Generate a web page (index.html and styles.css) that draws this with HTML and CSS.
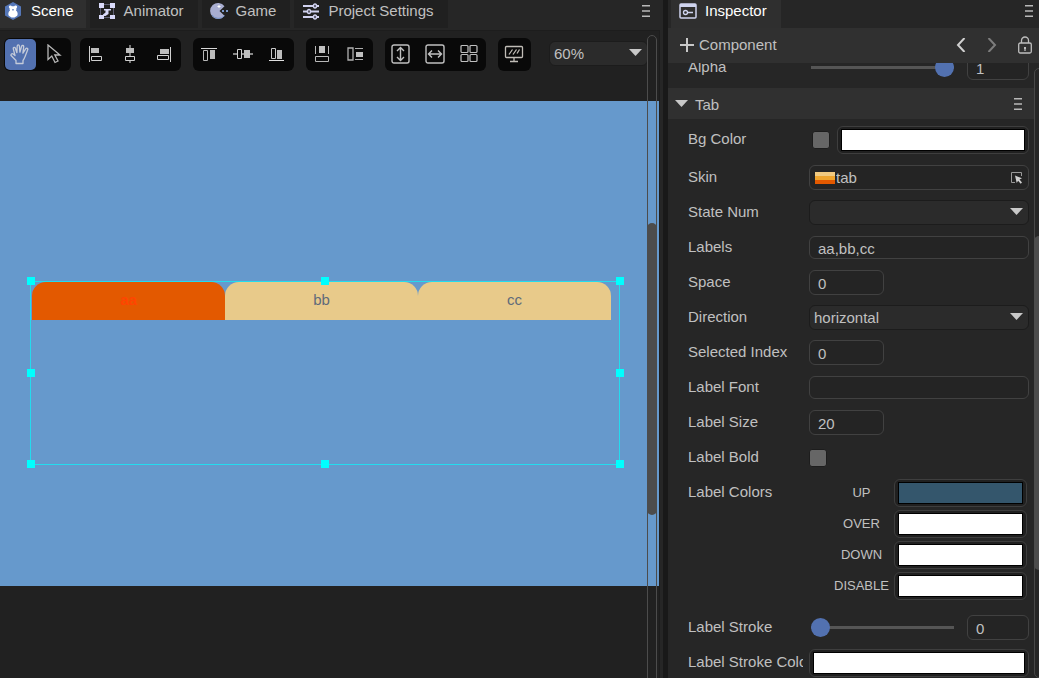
FILE: index.html
```html
<!DOCTYPE html>
<html lang="en">
<head>
<meta charset="utf-8">
<title>Scene editor</title>
<link rel="stylesheet" href="styles.css">
</head>
<body>
<div class="editor">
  <main class="scene-panel">
    <div class="tab-bar">
      <nav class="tabs">
        <button class="tab tab-first active" type="button">
          <svg class="tab-icon" width="18" height="18" viewBox="0 0 18 18"><path d="M8 0l8 4.500v9L8 18l-8-4.500v-9z" fill="#5577b8"/><path d="M4.200 4c1.200-1 2.200-.4 2.600.2h2.400c.4-.6 1.400-1.200 2.600-.2.700 1 .2 1.700-.4 2.200.2 1 0 1.700-.4 2.300 1.600 1.300 2.200 3.400 1.200 5.300L9.500 15.500h-3l-2.700-1.700c-1-1.900-.4-4 1.200-5.300-.4-.6-.6-1.300-.4-2.300C4 5.700 3.500 5 4.200 4z" fill="#fff"/><path d="M7 7h2v1.500H7z" fill="#8ba2cd"/></svg>
          Scene
        </button>
        <button class="tab" type="button">
          <svg class="tab-icon" width="18" height="18" viewBox="0 0 18 18" fill="#d9dafa"><path d="M1 1h5v5H1zM12 1h5v5h-5zM1 13h5v4H1zM12 13h5v4h-5z"/><path d="M6 2.500h6M2.500 6v7M15.500 6v7M6 15.500h6" fill="none" stroke="#5c5d70"/><path d="M13 7v1.500h-2.500V12l-3 2H5v-1.500l2.500-2V8.500H6V7z"/></svg>
          Animator
        </button>
        <button class="tab" type="button">
          <svg class="tab-icon" width="18" height="18" viewBox="0 0 18 18"><path d="M14.500 4.200A8 8 0 1 0 14.500 13.800L9.500 9z" fill="#a9aed1"/><path d="M14.500 13.800A8 8 0 0 1 2 13" fill="none" stroke="#7291c8"/><path d="M9 3v3M7.500 4.500h3" stroke="#fff"/><path d="M12 8h2v2h-2zM16 8h2v2h-2z" fill="#7896c8"/></svg>
          Game
        </button>
        <button class="tab" type="button">
          <svg class="tab-icon" width="18" height="18" viewBox="0 0 18 18" fill="none" stroke="#d0d1ee"><path d="M1 4h16M1 9.500h16M1 15h16" stroke-width="2"/><g fill="#262630" stroke-width="1.500"><ellipse cx="13" cy="4" rx="1.500" ry="2"/><ellipse cx="7" cy="9.500" rx="1.500" ry="2"/><ellipse cx="13" cy="15" rx="1.500" ry="2"/></g></svg>
          Project Settings
        </button>
      </nav>
      <button class="menu-button" type="button" aria-label="Panel menu"><svg width="10" height="12" viewBox="0 0 10 12" stroke="#b8b8b8" stroke-width="1.400"><path d="M1 .8h8M1 6h8M1 11.200h8"/></svg></button>
    </div>

    <div class="workspace">
      <div class="toolbar">
        <div class="tool-group tool-group-first">
          <button class="tool selected" type="button" aria-label="Hand"><svg width="20" height="22" viewBox="0 0 20 22" fill="none" stroke="#c4cbd9" stroke-width="1.300" stroke-linejoin="round"><path d="M6 20.500v-3L1.300 12.800c-1-1.200.5-2.700 1.800-1.800L5 12.500 3.300 5.800c-.3-1.500 1.600-2 2.100-.6l1.500 4.500L7.200 3c.1-1.600 2-1.600 2.200 0l.5 6.200 1.700-5.900c.5-1.400 2.300-.9 2.100.5l-.8 6.400 2.900-4.500c.9-1.100 2.400-.2 1.900 1.100l-2.800 7.100c-.5 1.500-1 2.500-1.900 3.600v3z"/></svg></button>
          <button class="tool" type="button" aria-label="Select"><svg width="16" height="20" viewBox="0 0 16 20" fill="none" stroke="#b8b8b8" stroke-width="1.300"><path d="M2 1v14.500l3.800-3.500 3.200 6.500 3-1.500-3.200-6H14z"/></svg></button>
        </div>
        <div class="tool-group">
          <button class="tool" type="button" aria-label="Align left"><svg width="16" height="16" viewBox="0 0 16 16" fill="none" stroke="#d0d0d0"><path d="M1.500 0v16"/><path d="M3 2h8v5H3z" fill="#bdbdbd" stroke="none"/><path d="M3.500 10.500h10v4h-10z"/></svg></button>
          <button class="tool" type="button" aria-label="Align center"><svg width="16" height="18" viewBox="0 0 16 18" fill="none" stroke="#d0d0d0"><path d="M8 0v18" stroke="#777" stroke-width="2"/><path d="M4 3h8v5H4z" fill="#bdbdbd" stroke="none"/><path d="M3.500 11.500h9v4h-9z" fill="#090909"/></svg></button>
          <button class="tool" type="button" aria-label="Align right"><svg width="16" height="16" viewBox="0 0 16 16" fill="none" stroke="#d0d0d0"><path d="M14.500 1v15"/><path d="M4 3h9v5H4z" fill="#bdbdbd" stroke="none"/><path d="M1.500 9.500h11v4h-11z"/></svg></button>
        </div>
        <div class="tool-group">
          <button class="tool" type="button" aria-label="Align top"><svg width="16" height="16" viewBox="0 0 16 16" fill="none" stroke="#b8b8b8"><path d="M0 2.500h16" stroke="#d8d8d8"/><path d="M2.500 4.500h4v10h-4z"/><path d="M9 4h5v9H9z" fill="#bdbdbd" stroke="none"/></svg></button>
          <button class="tool" type="button" aria-label="Align middle"><svg width="20" height="16" viewBox="0 0 20 16" fill="none" stroke="#d0d0d0"><path d="M0 8h20" stroke="#888" stroke-width="2"/><path d="M4.500 3.500h4v9h-4z" fill="#090909"/><path d="M11 4h6v8h-6z" fill="#bdbdbd" stroke="none"/></svg></button>
          <button class="tool" type="button" aria-label="Align bottom"><svg width="16" height="16" viewBox="0 0 16 16" fill="none" stroke="#c8c8c8"><path d="M0 14.500h15" stroke="#e0e0e0"/><path d="M2.500 2.500h4v10h-4z"/><path d="M8 4h5v9H8z" fill="#bdbdbd" stroke="none"/></svg></button>
        </div>
        <div class="tool-group">
          <button class="tool" type="button" aria-label="Distribute vertically"><svg width="16" height="18" viewBox="0 0 16 18" fill="none" stroke="#b8b8b8"><path d="M1.500 1v8M14.500 1v8"/><path d="M5 1h6v7H5z" fill="#c0c0c0" stroke="none"/><path d="M1.500 11.500h13v5h-13z"/></svg></button>
          <button class="tool" type="button" aria-label="Distribute horizontally"><svg width="18" height="16" viewBox="0 0 18 16" fill="none" stroke="#b0b0b0"><path d="M1 2h5v12H1z" stroke-width="1.300"/><path d="M8 2.500h8M8 13.500h8"/><path d="M9 6h7v5H9z" fill="#c0c0c0" stroke="none"/></svg></button>
        </div>
        <div class="tool-group">
          <button class="tool" type="button" aria-label="Fit height"><svg width="20" height="20" viewBox="0 0 20 20" fill="none" stroke="#c0c0c0" stroke-width="1.400"><rect x="1" y="1" width="17" height="18" rx="2"/><path d="M9.500 4v12M6 7l3.500-3.500L13 7M6 13l3.500 3.500L13 13"/></svg></button>
          <button class="tool" type="button" aria-label="Fit width"><svg width="20" height="20" viewBox="0 0 20 20" fill="none" stroke="#c0c0c0" stroke-width="1.400"><rect x="1" y="1" width="18" height="18" rx="2"/><path d="M4 10h12M7 6.500L3.500 10 7 13.500M13 6.500l3.500 3.500-3.500 3.500"/></svg></button>
          <button class="tool" type="button" aria-label="Grid"><svg width="18" height="20" viewBox="0 0 18 20" fill="none" stroke="#c0c0c0" stroke-width="1.200"><rect x="1" y="1.500" width="7" height="7" rx="1"/><rect x="10" y="1.500" width="7" height="7" rx="1"/><rect x="1" y="10.500" width="7" height="7" rx="1"/><rect x="10" y="10.500" width="7" height="7" rx="1"/></svg></button>
        </div>
        <div class="tool-group">
          <button class="tool" type="button" aria-label="Display"><svg width="20" height="18" viewBox="0 0 20 18" fill="none" stroke="#c0bcb6" stroke-width="1.300"><rect x="1.500" y="1.500" width="17" height="11" rx="1"/><path d="M5 9.500l3.500-5M9 9.500l3.500-5M13 8.500l2.500-4M10 12.500v4M6 16.500h8"/></svg></button>
        </div>
        <div class="select-box zoom-box">
          <select class="select zoom" aria-label="Zoom"><option>60%</option></select>
          <svg class="arrow" width="13" height="7" viewBox="0 0 13 7"><path d="M0 0h13L6.500 7z" fill="#c8c8c8"/></svg>
        </div>
      </div>

      <div class="stage">
        <div class="selection">
          <div class="game-tabs">
            <div class="game-tab on">aa</div>
            <div class="game-tab">bb</div>
            <div class="game-tab">cc</div>
          </div>
          <i class="handle top left"></i><i class="handle top center"></i><i class="handle top right"></i>
          <i class="handle middle left"></i><i class="handle middle right"></i>
          <i class="handle bottom left"></i><i class="handle bottom center"></i><i class="handle bottom right"></i>
        </div>
      </div>
      <div class="scene-scroll"><div class="scene-thumb"></div></div>
    </div>
  </main>

  <aside class="inspector">
    <div class="tab-bar">
      <div class="tabs inspector-tabs">
        <button class="tab active" type="button">
          <svg class="tab-icon" width="18" height="18" viewBox="0 0 18 18"><rect x="1" y="2" width="16" height="14" rx="1" fill="none" stroke="#cfd4ef" stroke-width="1.500"/><path d="M1 2h16v3H1z" fill="#cfd4ef"/><path d="M8 10.500h6" stroke="#cfd4ef" stroke-width="1.500"/><circle cx="6.500" cy="10.500" r="2" fill="none" stroke="#cfd4ef" stroke-width="1.300"/></svg>
          Inspector
        </button>
      </div>
      <button class="menu-button" type="button" aria-label="Inspector menu"><svg width="10" height="12" viewBox="0 0 10 12" stroke="#b8b8b8" stroke-width="1.400"><path d="M1 .8h8M1 6h8M1 11.200h8"/></svg></button>
    </div>

    <div class="component-bar">
      <button class="add" type="button"><svg width="14" height="14" viewBox="0 0 14 14"><path d="M7 0v14M0 7h14" stroke="#c8c8c8" stroke-width="2"/></svg>Component</button>
      <div class="history">
        <button class="plain" type="button" aria-label="Back"><svg width="10" height="14" viewBox="0 0 10 14"><path d="M8.500 0L2 7l6.500 7" fill="none" stroke="#d0d0d0" stroke-width="2"/></svg></button>
        <button class="plain" type="button" aria-label="Forward"><svg width="10" height="14" viewBox="0 0 10 14"><path d="M1.500 0L8 7l-6.500 7" fill="none" stroke="#7d7d7d" stroke-width="2"/></svg></button>
        <button class="plain" type="button" aria-label="Lock"><svg width="14" height="18" viewBox="0 0 14 18" fill="none" stroke="#bdbdbd" stroke-width="1.300"><rect x=".7" y="7" width="12.600" height="10" rx="1.500"/><path d="M3.500 7V4.500a3.500 3.500 0 0 1 7 0V7M7 11.500V15"/><path d="M6 11h2v2H6z" fill="#bdbdbd" stroke="none"/></svg></button>
      </div>
    </div>

    <div class="inspector-body">
      <div class="properties">
        <div class="row row-alpha">
          <label class="name" for="alpha">Alpha</label>
          <div class="field slider-field"><input class="slider" id="alpha" type="range" min="0" max="1" step="0.1" value="1"><input class="text number" aria-label="Alpha value" value="1"></div>
        </div>
        <div class="section-head">
          <button class="section-toggle" type="button"><svg width="13" height="7" viewBox="0 0 13 7"><path d="M0 0h13L6.500 7z" fill="#c8c8c8"/></svg><span class="section-title">Tab</span></button>
          <button class="plain" type="button" aria-label="Tab menu"><svg width="10" height="12" viewBox="0 0 10 12" stroke="#b8b8b8" stroke-width="1.400"><path d="M1 .8h8M1 6h8M1 11.200h8"/></svg></button>
        </div>
        <div class="row row-bg">
          <label class="name" for="bg">Bg Color</label>
          <div class="field bg-field"><input class="check" id="bg" type="checkbox"><input class="color" type="color" aria-label="Background color" value="#ffffff"></div>
        </div>
        <div class="row">
          <label class="name" for="skin">Skin</label>
          <div class="field"><div class="skin-box">
            <svg width="20" height="12" viewBox="0 0 20 12"><path d="M0 0h20v4H0z" fill="#f1ca80"/><path d="M0 4h20v4H0z" fill="#efa52e"/><path d="M0 8h20v4H0z" fill="#e35900"/></svg>
            <input class="skin" id="skin" value="tab">
            <button class="plain" type="button" aria-label="Pick skin"><svg width="13" height="13" viewBox="0 0 13 13"><path d="M5 11.500H1.500v-10h10V5" fill="none" stroke="#999"/><path d="M5 4.500l7 2.800-2.500 1.200 2.500 3-1.300 1.200-2.600-3L6.700 12z" fill="#d0d0d0"/></svg></button>
          </div></div>
        </div>
        <div class="row">
          <label class="name" for="state">State Num</label>
          <div class="field"><div class="select-box"><select class="select" id="state"><option></option></select><svg class="arrow" width="13" height="7" viewBox="0 0 13 7"><path d="M0 0h13L6.500 7z" fill="#c8c8c8"/></svg></div></div>
        </div>
        <div class="row">
          <label class="name" for="labels">Labels</label>
          <div class="field"><input class="text wide" id="labels" value="aa,bb,cc"></div>
        </div>
        <div class="row">
          <label class="name" for="space">Space</label>
          <div class="field"><input class="text short" id="space" value="0"></div>
        </div>
        <div class="row">
          <label class="name" for="direction">Direction</label>
          <div class="field"><div class="select-box"><select class="select" id="direction"><option>horizontal</option></select><svg class="arrow" width="13" height="7" viewBox="0 0 13 7"><path d="M0 0h13L6.500 7z" fill="#c8c8c8"/></svg></div></div>
        </div>
        <div class="row">
          <label class="name" for="index">Selected Index</label>
          <div class="field"><input class="text short" id="index" value="0"></div>
        </div>
        <div class="row">
          <label class="name" for="font">Label Font</label>
          <div class="field"><input class="text wide" id="font"></div>
        </div>
        <div class="row">
          <label class="name" for="size">Label Size</label>
          <div class="field"><input class="text short" id="size" value="20"></div>
        </div>
        <div class="row">
          <label class="name" for="bold">Label Bold</label>
          <div class="field"><input class="check" id="bold" type="checkbox"></div>
        </div>
        <div class="row row-colors">
          <span class="name">Label Colors</span>
          <div class="field colors">
            <label for="up">UP</label><input class="color" id="up" type="color" value="#34566c">
            <label for="over">OVER</label><input class="color" id="over" type="color" value="#ffffff">
            <label for="down">DOWN</label><input class="color" id="down" type="color" value="#ffffff">
            <label for="disable">DISABLE</label><input class="color" id="disable" type="color" value="#ffffff">
          </div>
        </div>
        <div class="row">
          <label class="name" for="stroke">Label Stroke</label>
          <div class="field slider-field"><input class="slider" id="stroke" type="range" min="0" max="10" value="0"><input class="text number" aria-label="Label stroke value" value="0"></div>
        </div>
        <div class="row">
          <label class="name" for="stroke-color">Label Stroke Color</label>
          <div class="field"><input class="color" id="stroke-color" type="color" value="#ffffff"></div>
        </div>
      </div>
      <div class="inspector-scroll"><div class="inspector-thumb"></div></div>
    </div>
  </aside>
</div>
</body>
</html>
```
FILE: styles.css
```css
* { box-sizing: border-box; }

body {
  margin: 0;
  background: #191919;
  color: #c0c0c0;
  font: 15px/20px "Liberation Sans", Arial, sans-serif;
}

button, input, select { font: inherit; color: inherit; margin: 0; }
button { border: 0; padding: 0; background: none; }
svg { display: block; flex: none; }

.editor {
  display: grid;
  grid-template-columns: minmax(0, 1fr) 371px;
  gap: 5px;
  height: 100vh;
  overflow: hidden;
}

.scene-panel, .inspector {
  display: flex;
  flex-direction: column;
  min-width: 0;
  min-height: 0;
  background: #262626;
}

/* Panel tabs */
.tab-bar {
  display: flex;
  justify-content: space-between;
  flex: none;
  height: 28px;
}
.tabs { display: flex; gap: 4px; }
.inspector-tabs { padding-left: 3px; }
.tab {
  display: flex;
  align-items: center;
  gap: 8px;
  padding: 0 14px 6px 8px;
  background: #202020;
  white-space: nowrap;
}
.tab.active { background: #2f2f2f; color: #fff; }
.tab-first { padding-right: 12px; padding-left: 5px; }
.menu-button { padding: 0 12px 6px; }
.inspector .menu-button { padding-right: 5px; }

/* Scene workspace */
.workspace {
  position: relative;
  display: flex;
  flex-direction: column;
  flex: 1;
  min-height: 0;
  margin: 3px 4px 0 0;
  padding-bottom: 92px;
  background: #212121;
  box-shadow: 0 0 0 1px #1d1d1d;
}
.toolbar {
  display: flex;
  align-items: flex-start;
  gap: 12px;
  flex: none;
  height: 70px;
  padding: 7px 11px 0 4px;
}
.tool-group {
  display: flex;
  gap: 3px;
  padding: 1px;
  border-radius: 6px;
  background: #090909;
}
.tool-group-first { margin-right: -3px; }
.tool {
  display: grid;
  place-items: center;
  width: 31px;
  height: 31px;
  padding: 0 2px 2px 0;
  border-radius: 5px;
}
.tool.selected { background: #5271b0; }

.select-box { position: relative; width: 100%; }
.zoom-box { flex: 1; margin: 3px 0 0 6px; }
.select {
  display: block;
  appearance: none;
  width: 100%;
  height: 25px;
  padding: 0 20px 0 4px;
  border: 1px solid #1c1c1c;
  border-radius: 6px;
  background: #2b2b2b;
}
.arrow {
  position: absolute;
  top: 8px;
  right: 6px;
  pointer-events: none;
}

/* Canvas */
.stage {
  position: relative;
  flex: 1;
  min-height: 0;
  background: #6699cc;
}
.selection {
  position: absolute;
  top: 180px;
  left: 30px;
  width: 590px;
  height: 184px;
  border: 1px solid #23dcee;
}
.game-tabs { display: flex; width: 580px; padding-left: 1px; }
.game-tab {
  flex: 1;
  height: 38px;
  border-radius: 14px 14px 0 0;
  background: #e8ca8a;
  color: #5f6b7a;
  line-height: 36px;
  text-align: center;
}
.game-tab.on { background: #e35900; color: #ff4500; font-weight: bold; }
.handle {
  position: absolute;
  width: 8px;
  height: 8px;
  background: #00ffff;
}
.handle.top { top: -5px; }
.handle.middle { top: calc(50% - 4px); }
.handle.bottom { bottom: -4px; }
.handle.left { left: -4px; }
.handle.center { left: calc(50% - 4px); }
.handle.right { right: -5px; }

.scene-scroll {
  position: absolute;
  top: 4px;
  right: 2px;
  bottom: -8px;
  width: 10px;
  border: 1px solid #4c4c4c;
  border-radius: 5px;
}
.scene-thumb {
  width: 10px;
  height: 45%;
  margin: 187px 0 0 -1px;
  border-radius: 5px;
  background: #4c4c4c;
}

/* Inspector */
.component-bar {
  display: flex;
  align-items: center;
  justify-content: space-between;
  flex: none;
  height: 35px;
  padding: 0 7px 2px 12px;
  background: #303030;
}
.add { display: flex; align-items: center; gap: 5px; }
.history { display: flex; align-items: center; gap: 21px; }
.inspector-body {
  display: flex;
  flex: 1;
  min-height: 0;
  overflow: hidden;
}
.properties { flex: 1; min-width: 0; }
.inspector-scroll {
  flex: none;
  width: 10px;
  margin: 5px -5px 0 0;
  border: 1px solid #484848;
  border-radius: 5px;
}
.inspector-thumb {
  width: 10px;
  height: 55%;
  margin: 167px 0 0 -1px;
  border-radius: 5px;
  background: #4c4c4c;
}
.section-head {
  display: flex;
  align-items: center;
  justify-content: space-between;
  height: 31px;
  padding: 0 11px 0 7px;
  background: #303030;
}
.section-toggle { display: flex; align-items: center; gap: 7px; }
.section-title { padding-top: 2px; }

.row {
  display: grid;
  grid-template-columns: 115px minmax(0, 1fr);
  gap: 6px;
  align-items: center;
  height: 35px;
  padding: 0 5px 0 20px;
}
.row-alpha { margin: -13px 0 3px; }
.row-bg { height: 41px; }
.name { overflow: hidden; padding-bottom: 2px; white-space: nowrap; }
.row-colors { height: auto; align-items: start; padding: 2px 7px 9px 20px; }
.row-colors .name { padding-top: 5px; }
.field { display: flex; align-items: center; }

.text {
  min-width: 0;
  height: 25px;
  padding: 1px 8px 0;
  border: 1px solid #414141;
  border-radius: 6px;
  background: #242424;
}
.wide { width: 100%; height: 23px; }
.short { width: 75px; }
.number { width: 62px; }

.check {
  appearance: none;
  width: 18px;
  height: 18px;
  border: 1px solid #1d1d1d;
  border-radius: 3px;
  background: #666;
}
.bg-field { gap: 7px; padding-left: 3px; }

.color {
  appearance: none;
  flex: 1;
  min-width: 0;
  width: 100%;
  height: 28px;
  padding: 2px 3px;
  border: 1px solid #3e3e3e;
  border-radius: 6px;
  background: #202020;
}
.color::-webkit-color-swatch-wrapper { padding: 0; }
.color::-webkit-color-swatch { border: 1px solid #000; border-radius: 0; }

.skin-box {
  display: flex;
  align-items: center;
  gap: 1px;
  width: 100%;
  height: 25px;
  padding: 0 5px;
  border: 1px solid #414141;
  border-radius: 6px;
  background: #242424;
}
.skin {
  flex: 1;
  min-width: 0;
  padding: 0;
  border: 0;
  background: none;
}

.colors {
  display: grid;
  grid-template-columns: 65px minmax(0, 1fr);
  grid-auto-rows: 31px;
  padding-left: 20px;
  font-size: 13px;
  text-align: center;
}

.slider-field { gap: 13px; padding-left: 2px; }
.slider {
  appearance: none;
  flex: 1;
  min-width: 0;
  height: 19px;
  background: none;
}
.slider::-webkit-slider-runnable-track { height: 3px; background: #555; }
.slider::-webkit-slider-thumb {
  appearance: none;
  width: 19px;
  height: 19px;
  margin-top: -8px;
  border-radius: 50%;
  background: #5271b0;
}
```
